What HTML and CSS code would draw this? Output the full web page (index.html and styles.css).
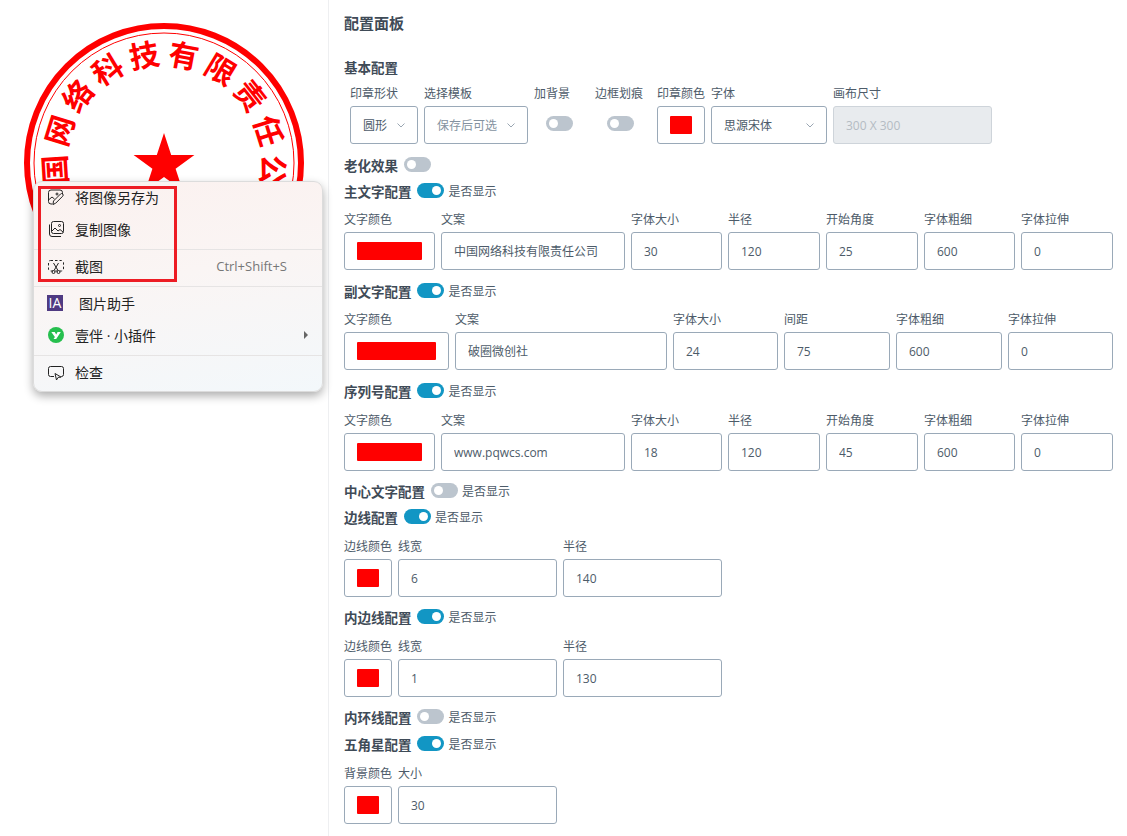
FILE: index.html
```html
<!DOCTYPE html>
<html lang="zh-CN">
  <head>
    <meta charset="UTF-8" />
    <meta name="viewport" content="width=device-width, initial-scale=1.0" />
    <title>印章生成</title>
    <link rel="stylesheet" href="styles.css">
  </head>
  <body>
    <div class="page">
      <!-- Stamp preview -->
      <div class="preview">
        <svg class="stamp" width="300" height="300" viewBox="0 0 300 300">
          <circle cx="150" cy="150" r="137" fill="none" stroke="#f00" stroke-width="6" />
          <circle cx="150" cy="150" r="130" fill="none" stroke="#f00" stroke-width="1" />
          <g class="stamp-text">
            <text x="150" y="52" transform="rotate(-114.4 150 150)">中</text>
            <text x="150" y="52" transform="rotate(-93.6 150 150)">国</text>
            <text x="150" y="52" transform="rotate(-72.8 150 150)">网</text>
            <text x="150" y="52" transform="rotate(-52 150 150)">络</text>
            <text x="150" y="52" transform="rotate(-31.2 150 150)">科</text>
            <text x="150" y="52" transform="rotate(-10.4 150 150)">技</text>
            <text x="150" y="52" transform="rotate(10.4 150 150)">有</text>
            <text x="150" y="52" transform="rotate(31.2 150 150)">限</text>
            <text x="150" y="52" transform="rotate(52 150 150)">责</text>
            <text x="150" y="52" transform="rotate(72.8 150 150)">任</text>
            <text x="150" y="52" transform="rotate(93.6 150 150)">公</text>
            <text x="150" y="52" transform="rotate(114.4 150 150)">司</text>
          </g>
          <polygon fill="#f00" points="150,120 157.2,142.1 180.4,142.1 161.6,155.7 168.8,177.8 150,164.1 131.2,177.8 138.4,155.7 119.6,142.1 142.8,142.1" />
        </svg>
      </div>

      <!-- Config panel -->
      <div class="panel">
        <h1 class="panel-title">配置面板</h1>

        <div class="group-head first">
          <span class="group-name">基本配置</span>
        </div>
        <div class="basic-row">
          <div class="field w-shape">
            <label>印章形状</label>
            <div class="select">圆形<svg width="8" height="5" viewBox="0 0 8 5"><path d="M.5.5L4 4 7.5.5" /></svg></div>
          </div>
          <div class="field w-template">
            <label>选择模板</label>
            <div class="select muted">保存后可选<svg width="8" height="5" viewBox="0 0 8 5"><path d="M.5.5L4 4 7.5.5" /></svg></div>
          </div>
          <div class="field w-toggle-a">
            <label>加背景</label>
            <div class="toggle-cell"><span class="switch"></span></div>
          </div>
          <div class="field w-toggle-b">
            <label>边框划痕</label>
            <div class="toggle-cell"><span class="switch"></span></div>
          </div>
          <div class="field w-color">
            <label>印章颜色</label>
            <div class="swatch"><i></i></div>
          </div>
          <div class="field w-font">
            <label>字体</label>
            <div class="select">思源宋体<svg width="8" height="5" viewBox="0 0 8 5"><path d="M.5.5L4 4 7.5.5" /></svg></div>
          </div>
          <div class="field w-canvas">
            <label>画布尺寸</label>
            <input class="input" value="300 X 300" disabled />
          </div>
        </div>

        <div class="group-head">
          <span class="group-name">老化效果</span>
          <span class="switch"></span>
        </div>

        <div class="group-head tight">
          <span class="group-name">主文字配置</span>
          <span class="switch on"></span>
          <span class="show-label">是否显示</span>
        </div>
        <div class="row cols-main">
          <div class="field"><label>文字颜色</label><div class="swatch"><i></i></div></div>
          <div class="field"><label>文案</label><input class="input" value="中国网络科技有限责任公司" /></div>
          <div class="field"><label>字体大小</label><input class="input" value="30" /></div>
          <div class="field"><label>半径</label><input class="input" value="120" /></div>
          <div class="field"><label>开始角度</label><input class="input" value="25" /></div>
          <div class="field"><label>字体粗细</label><input class="input" value="600" /></div>
          <div class="field"><label>字体拉伸</label><input class="input" value="0" /></div>
        </div>

        <div class="group-head">
          <span class="group-name">副文字配置</span>
          <span class="switch on"></span>
          <span class="show-label">是否显示</span>
        </div>
        <div class="row cols-sub">
          <div class="field"><label>文字颜色</label><div class="swatch"><i></i></div></div>
          <div class="field"><label>文案</label><input class="input" value="破圈微创社" /></div>
          <div class="field"><label>字体大小</label><input class="input" value="24" /></div>
          <div class="field"><label>间距</label><input class="input" value="75" /></div>
          <div class="field"><label>字体粗细</label><input class="input" value="600" /></div>
          <div class="field"><label>字体拉伸</label><input class="input" value="0" /></div>
        </div>

        <div class="group-head">
          <span class="group-name">序列号配置</span>
          <span class="switch on"></span>
          <span class="show-label">是否显示</span>
        </div>
        <div class="row roomy cols-main">
          <div class="field"><label>文字颜色</label><div class="swatch"><i></i></div></div>
          <div class="field"><label>文案</label><input class="input" value="www.pqwcs.com" /></div>
          <div class="field"><label>字体大小</label><input class="input" value="18" /></div>
          <div class="field"><label>半径</label><input class="input" value="120" /></div>
          <div class="field"><label>开始角度</label><input class="input" value="45" /></div>
          <div class="field"><label>字体粗细</label><input class="input" value="600" /></div>
          <div class="field"><label>字体拉伸</label><input class="input" value="0" /></div>
        </div>

        <div class="group-head snug">
          <span class="group-name">中心文字配置</span>
          <span class="switch"></span>
          <span class="show-label">是否显示</span>
        </div>

        <div class="group-head tight">
          <span class="group-name">边线配置</span>
          <span class="switch on"></span>
          <span class="show-label">是否显示</span>
        </div>
        <div class="row roomy cols-line">
          <div class="field"><label>边线颜色</label><div class="swatch"><i></i></div></div>
          <div class="field"><label>线宽</label><input class="input" value="6" /></div>
          <div class="field"><label>半径</label><input class="input" value="140" /></div>
        </div>

        <div class="group-head snug">
          <span class="group-name">内边线配置</span>
          <span class="switch on"></span>
          <span class="show-label">是否显示</span>
        </div>
        <div class="row roomy cols-line">
          <div class="field"><label>边线颜色</label><div class="swatch"><i></i></div></div>
          <div class="field"><label>线宽</label><input class="input" value="1" /></div>
          <div class="field"><label>半径</label><input class="input" value="130" /></div>
        </div>

        <div class="group-head snug">
          <span class="group-name">内环线配置</span>
          <span class="switch"></span>
          <span class="show-label">是否显示</span>
        </div>

        <div class="group-head loose">
          <span class="group-name">五角星配置</span>
          <span class="switch on"></span>
          <span class="show-label">是否显示</span>
        </div>
        <div class="row roomy cols-line">
          <div class="field"><label>背景颜色</label><div class="swatch"><i></i></div></div>
          <div class="field"><label>大小</label><input class="input" value="30" /></div>
        </div>
      </div>
    </div>

    <!-- Browser context menu over the stamp -->
    <div class="menu">
      <div class="menu-item">
        <svg class="menu-icon" width="16" height="16" viewBox="0 0 16 16">
          <path d="M4.500 15H3A2.500 2.500 0 0 1 .5 12.500V3.500A2.500 2.500 0 0 1 3 1h9a2.500 2.500 0 0 1 2.500 2.500V5" />
          <path d="M.5 11l3.500-3 2.500 2" />
          <circle cx="9" cy="5" r="1" />
          <path d="M5 15.500l.5-3.500 7-7a1.500 1.500 0 0 1 2.200 2.200l-7 7z" />
        </svg>
        将图像另存为
      </div>
      <div class="menu-item">
        <svg class="menu-icon" width="16" height="16" viewBox="0 0 16 16">
          <rect x="3.500" y="0.500" width="12" height="12" rx="2" />
          <path d="M1.500 3.500v9.500a2.500 2.500 0 0 0 2.500 2.500h9" />
          <path d="M3.500 10.500l3.500-3.500 3 3 2-1.500 3 2.500" />
          <circle cx="11.500" cy="4.500" r="1" />
        </svg>
        复制图像
      </div>
      <div class="menu-sep"></div>
      <div class="menu-item">
        <svg class="menu-icon" width="16" height="16" viewBox="0 0 16 16">
          <rect x="0.500" y="2.500" width="15" height="10.500" rx="2" stroke-dasharray="2.500 2" />
          <path d="M5.500 5l4.500 7.500M10.500 5L6 12.500" />
          <circle cx="5.500" cy="14" r="1.500" />
          <circle cx="10.500" cy="14" r="1.500" />
        </svg>
        截图
        <span class="shortcut">Ctrl+Shift+S</span>
      </div>
      <div class="menu-sep"></div>
      <div class="menu-item">
        <span class="ia-logo">IA</span>
        <span class="ia-name">图片助手</span>
      </div>
      <div class="menu-item has-sub">
        <svg class="menu-icon logo" width="16" height="16" viewBox="0 0 16 16">
          <circle cx="8" cy="8" r="8" />
          <path d="M3.300 5h3.400l1.500 2.600L9.600 5h3.200l-4.600 7H5.600l1.300-2z" />
        </svg>
        壹伴 · 小插件
        <span class="sub-arrow"></span>
      </div>
      <div class="menu-sep"></div>
      <div class="menu-item">
        <svg class="menu-icon" width="16" height="16" viewBox="0 0 16 16">
          <path d="M6 12.500H2.500a2 2 0 0 1-2-2v-6a2 2 0 0 1 2-2h11a2 2 0 0 1 2 2v6a2 2 0 0 1-2 2H13" />
          <path d="M7 9.500l1.500 6.500 1.600-2.600 3-.3z" />
        </svg>
        检查
      </div>
      <div class="red-box"></div>
    </div>
  </body>
</html>
```

FILE: styles.css
```css
* {
  margin: 0;
  padding: 0;
  box-sizing: border-box;
}

body {
  font-family: "Open Sans", "Noto Sans CJK SC", sans-serif;
  background: #fff;
  color: #4d5b69;
  overflow: hidden;
  height: 836px;
}

.page {
  display: flex;
  height: 836px;
}

/* Stamp preview */
.preview {
  width: 329px;
  flex: none;
  padding: 13px 14px;
  border-right: 1px solid #eeeff1;
}

.stamp {
  display: block;
}

.stamp-text text {
  font-family: "Noto Sans CJK SC", sans-serif;
  font-size: 30px;
  font-weight: 700;
  fill: #f00;
  text-anchor: middle;
}

/* Config panel */
.panel {
  flex: 1;
  padding: 13px 14px 0 15px;
}

.panel-title {
  font-size: 15px;
  line-height: 20px;
  font-weight: 700;
  color: #3f4b57;
}

.group-head {
  display: flex;
  align-items: center;
  height: 20px;
  margin-top: 11px;
}

.group-head.first {
  margin-top: 24px;
}

.group-head.tight {
  margin-top: 6px;
}

.group-head.loose {
  margin-top: 7px;
}

.group-head.snug {
  margin-top: 10px;
}

.group-name {
  font-size: 13.5px;
  font-weight: 700;
  color: #3f4b57;
  margin-right: 5.5px;
}

.show-label {
  font-size: 12px;
  line-height: 14px;
  margin-left: 4.5px;
  margin-top: 1px;
  color: #4d5b69;
}

.switch {
  display: block;
  position: relative;
  width: 27px;
  height: 15px;
  border-radius: 8px;
  background: #bcc5ce;
  margin-top: -1px;
}

.switch::after {
  content: "";
  position: absolute;
  top: 3px;
  left: 3px;
  width: 9px;
  height: 9px;
  border-radius: 50%;
  background: #fff;
}

.switch.on {
  background: #1296c4;
}

.switch.on::after {
  left: 15px;
}

/* Rows */
.row {
  display: grid;
  column-gap: 6px;
  margin-top: 12px;
}

.row.roomy {
  margin-top: 13px;
}

.cols-main {
  grid-template-columns: 91px 184px 91px 92px 92px 91px 92px;
}

.cols-sub {
  grid-template-columns: 105px 212px 105px 106px 106px 105px;
}

.cols-line {
  grid-template-columns: 48px 159px 159px;
}

.basic-row {
  display: flex;
  gap: 6px;
  padding-left: 6px;
  margin-top: 10px;
}

.w-shape { width: 68px; }
.w-template { width: 104px; }
.w-toggle-a { width: 55px; }
.w-toggle-b { width: 56px; }
.w-color { width: 48px; flex: none; }
.w-font { width: 116px; }
.w-canvas { width: 159px; }

.field label {
  display: block;
  font-size: 12px;
  line-height: 14px;
  margin-bottom: 5px;
  white-space: nowrap;
}

.toggle-cell {
  padding: 10px 0 0 12px;
}

.toggle-cell .switch {
  margin-top: 0;
}

.input,
.select,
.swatch {
  display: block;
  width: 100%;
  height: 38px;
  background: #fff;
  border: 1px solid #9aa9b8;
  border-radius: 3px;
}

.input {
  font: 12px "Open Sans", "Noto Sans CJK SC", sans-serif;
  color: #4d5b69;
  padding: 0 12px;
  outline: none;
}

.input:disabled {
  background: #e8ebee;
  border-color: #ced4da;
  color: #b4bbc3;
}

.select {
  display: flex;
  align-items: center;
  justify-content: space-between;
  font-size: 12px;
  padding: 0 12px;
}

.select.muted {
  color: #8492a0;
}

.select svg {
  flex: none;
}

.select path {
  fill: none;
  stroke: #9aa6b2;
  stroke-width: 1;
}

.swatch {
  padding: 9px 12px;
}

.swatch i {
  display: block;
  height: 18px;
  background: #f00;
  border-radius: 1px;
}

/* Context menu */
.menu {
  position: absolute;
  left: 33px;
  top: 181px;
  width: 290px;
  height: 211px;
  border: 1px solid #dcdcdc;
  border-radius: 9px;
  background: linear-gradient(170deg, #fbf1ef 0%, #faf5f4 45%, #f3f8fb 100%);
  box-shadow: 0 4px 10px rgba(0, 0, 0, 0.32);
  color: #222;
  font-size: 14px;
}

.menu-item {
  display: flex;
  align-items: center;
  height: 32px;
  padding: 0 35px 0 14px;
  white-space: nowrap;
}

.menu-item:first-child {
  margin-top: -1px;
}

.menu-item.has-sub {
  padding-right: 14px;
}

.menu-icon {
  flex: none;
  margin-right: 11px;
}

.menu-icon path,
.menu-icon rect,
.menu-icon circle {
  fill: none;
  stroke: #222;
  stroke-width: 1;
}

.menu-icon.logo path,
.menu-icon.logo circle {
  stroke: none;
}

.menu-icon.logo circle {
  fill: #26bf4e;
}

.menu-icon.logo path {
  fill: #fff;
}

.menu-sep {
  height: 1px;
  margin-top: 4px;
  background: #e6e4e4;
}

.ia-logo {
  width: 16px;
  height: 16px;
  flex: none;
  margin-left: -1px;
  background: #4f3a82;
  color: #fff;
  font-size: 14px;
  line-height: 16px;
  text-align: center;
}

.ia-name {
  margin-left: 16px;
}

.shortcut {
  margin-left: auto;
  font-size: 13px;
  color: #777;
}

.sub-arrow {
  margin-left: auto;
  width: 0;
  height: 0;
  border-left: 4px solid #666;
  border-top: 4px solid transparent;
  border-bottom: 4px solid transparent;
}

.red-box {
  position: absolute;
  left: 4px;
  top: 4px;
  width: 139px;
  height: 96px;
  border: 3px solid #ed1c24;
}
```
